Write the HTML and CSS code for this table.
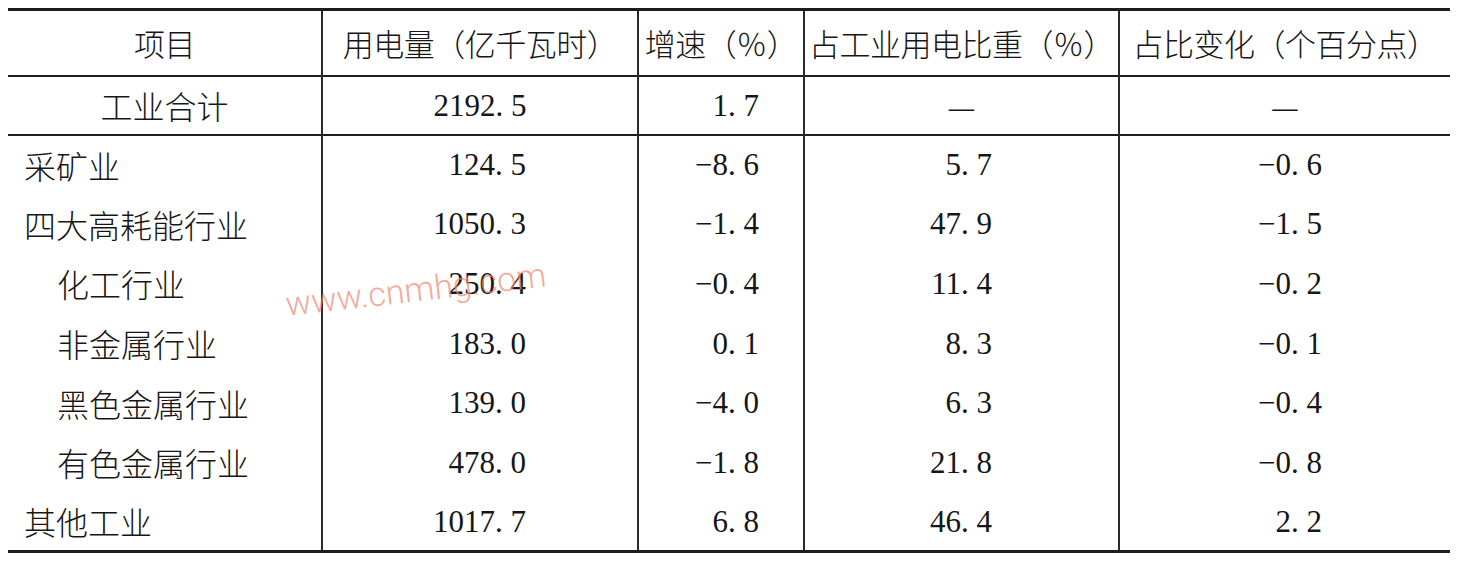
FILE: index.html
```html
<!DOCTYPE html>
<html lang="zh-CN">
<head>
<meta charset="utf-8">
<title>工业用电量</title>
<link rel="stylesheet" href="styles.css">
</head>
<body>
<div class="sheet">
  <table class="data">
    <colgroup>
      <col class="c1"><col class="c2"><col class="c3"><col class="c4"><col class="c5">
    </colgroup>
    <thead>
      <tr class="head">
        <th>项目</th>
        <th>用电量（亿千瓦时）</th>
        <th>增速（％）</th>
        <th>占工业用电比重（％）</th>
        <th>占比变化（个百分点）</th>
      </tr>
    </thead>
    <tbody>
      <tr class="total">
        <td class="name center">工业合计</td>
        <td class="num center">2192. 5</td>
        <td class="num n3">1. 7</td>
        <td class="dash">—</td>
        <td class="dash">—</td>
      </tr>
      <tr class="row">
        <td class="name">采矿业</td>
        <td class="num n2">124. 5</td>
        <td class="num n3">−8. 6</td>
        <td class="num n4">5. 7</td>
        <td class="num n5">−0. 6</td>
      </tr>
      <tr class="row">
        <td class="name">四大高耗能行业</td>
        <td class="num n2">1050. 3</td>
        <td class="num n3">−1. 4</td>
        <td class="num n4">47. 9</td>
        <td class="num n5">−1. 5</td>
      </tr>
      <tr class="row">
        <td class="name sub">化工行业</td>
        <td class="num n2">250. 4</td>
        <td class="num n3">−0. 4</td>
        <td class="num n4">11. 4</td>
        <td class="num n5">−0. 2</td>
      </tr>
      <tr class="row">
        <td class="name sub">非金属行业</td>
        <td class="num n2">183. 0</td>
        <td class="num n3">0. 1</td>
        <td class="num n4">8. 3</td>
        <td class="num n5">−0. 1</td>
      </tr>
      <tr class="row">
        <td class="name sub">黑色金属行业</td>
        <td class="num n2">139. 0</td>
        <td class="num n3">−4. 0</td>
        <td class="num n4">6. 3</td>
        <td class="num n5">−0. 4</td>
      </tr>
      <tr class="row">
        <td class="name sub">有色金属行业</td>
        <td class="num n2">478. 0</td>
        <td class="num n3">−1. 8</td>
        <td class="num n4">21. 8</td>
        <td class="num n5">−0. 8</td>
      </tr>
      <tr class="row">
        <td class="name">其他工业</td>
        <td class="num n2">1017. 7</td>
        <td class="num n3">6. 8</td>
        <td class="num n4">46. 4</td>
        <td class="num n5">2. 2</td>
      </tr>
    </tbody>
  </table>
  <div class="watermark">www.cnmhg.com</div>
</div>
</body>
</html>
```

FILE: styles.css
```css
html, body {
  margin: 0;
  padding: 0;
  background: #ffffff;
}

.sheet {
  position: relative;
  padding: 8px 0 0 8px;
  width: 1459px;
  height: 561px;
  box-sizing: border-box;
}

.data {
  border-collapse: collapse;
  table-layout: fixed;
  width: 1442px;
  color: #161616;
  font-family: "Noto Sans CJK SC", "Liberation Serif", sans-serif;
  font-weight: 300;
  font-size: 31px;
  border-top: 3px solid #1e1e1e;
  border-bottom: 3px solid #1e1e1e;
}

.c1 { width: 314px; }
.c2 { width: 316px; }
.c3 { width: 166px; }
.c4 { width: 315px; }
.c5 { width: 331px; }

.data th,
.data td {
  padding: 0;
  vertical-align: middle;
  white-space: nowrap;
  line-height: 1;
}

.data th + th,
.data td + td {
  border-left: 2px solid #2a2a2a;
}

.data th {
  font-weight: 300;
  text-align: center;
  letter-spacing: -0.5px;
}

.head {
  height: 66px;
  border-bottom: 2px solid #1e1e1e;
}

.total {
  height: 59px;
  border-bottom: 2px solid #1e1e1e;
}

.row {
  height: 59.6px;
}

.name {
  text-align: left;
  padding-left: 16px !important;
  font-size: 32px;
}

.name.sub {
  padding-left: 49px !important;
}

.name.center {
  text-align: center;
  padding-left: 0 !important;
}

.num {
  font-family: "Liberation Serif", "Times New Roman", serif;
  font-weight: normal;
  font-size: 31px;
  text-align: right;
}

.num.center {
  text-align: center;
  padding-right: 0;
}

.n2 { padding-right: 111px !important; }
.n3 { padding-right: 44px !important; }
.n4 { padding-right: 126px !important; }
.n5 { padding-right: 128px !important; }

.dash {
  text-align: center;
  font-size: 32px;
}

.watermark {
  position: absolute;
  left: 288px;
  top: 284px;
  font-family: Roboto, "Liberation Sans", sans-serif;
  font-weight: 300;
  font-size: 34px;
  color: rgba(240, 130, 110, 0.7);
  transform: rotate(-6.5deg);
  transform-origin: left bottom;
  white-space: nowrap;
  pointer-events: none;
}
```
